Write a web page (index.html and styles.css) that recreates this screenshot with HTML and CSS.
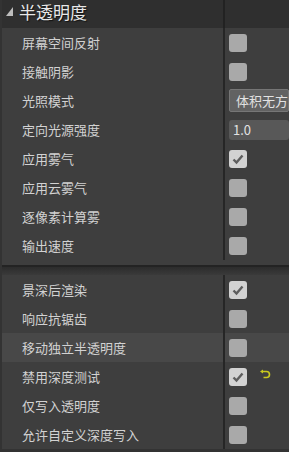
FILE: index.html
```html
<!DOCTYPE html>
<html lang="zh">
<head>
    <meta charset="UTF-8">
    <meta name="viewport" content="width=device-width, initial-scale=1.0">
    <title>半透明度</title>
    <link rel="stylesheet" href="styles.css">
</head>
<body>

<div class="panel">
    <div class="category">
        <div class="cat-name"><span class="arrow"></span><span class="cat-title">半透明度</span></div>
        <div class="cat-value"></div>
    </div>

    <div class="group">
        <div class="row"><div class="name">屏幕空间反射</div><div class="value"><span class="check"></span></div></div>
        <div class="row"><div class="name">接触阴影</div><div class="value"><span class="check"></span></div></div>
        <div class="row"><div class="name">光照模式</div><div class="value"><span class="combo">体积无方</span></div></div>
        <div class="row"><div class="name">定向光源强度</div><div class="value"><span class="numbox">1.0</span></div></div>
        <div class="row"><div class="name">应用雾气</div><div class="value"><span class="check on"><svg viewBox="0 0 18 18"><path d="M4.5 9.5 L7.5 12.5 L13.5 5.5"/></svg></span></div></div>
        <div class="row"><div class="name">应用云雾气</div><div class="value"><span class="check"></span></div></div>
        <div class="row"><div class="name">逐像素计算雾</div><div class="value"><span class="check"></span></div></div>
        <div class="row"><div class="name">输出速度</div><div class="value"><span class="check"></span></div></div>
    </div>

    <div class="group-gap"></div>

    <div class="group">
        <div class="row"><div class="name">景深后渲染</div><div class="value"><span class="check on"><svg viewBox="0 0 18 18"><path d="M4.5 9.5 L7.5 12.5 L13.5 5.5"/></svg></span></div></div>
        <div class="row"><div class="name">响应抗锯齿</div><div class="value"><span class="check"></span></div></div>
        <div class="row hover"><div class="name">移动独立半透明度</div><div class="value"><span class="check"></span></div></div>
        <div class="row">
            <div class="name">禁用深度测试</div>
            <div class="value">
                <span class="check on"><svg viewBox="0 0 18 18"><path d="M4.5 9.5 L7.5 12.5 L13.5 5.5"/></svg></span>
                <svg class="reset" viewBox="0 0 12 11"><path d="M3 2.5 H7.5 A3 3 0 0 1 7.5 8.5 H4.5"/><path class="tip" d="M1 2.5 L4 0.5 L4 4.5 Z"/></svg>
            </div>
        </div>
        <div class="row"><div class="name">仅写入透明度</div><div class="value"><span class="check"></span></div></div>
        <div class="row"><div class="name">允许自定义深度写入</div><div class="value"><span class="check"></span></div></div>
    </div>
</div>

</body>
</html>
```

FILE: styles.css
```css
body {
    margin: 0;
    background-color: #333333;
    font-family: "Noto Sans CJK SC", "Noto Sans", sans-serif;
    color: #d2d2d2;
    overflow: hidden;
}
.panel {
    margin-left: 2px;
    background-color: #3e3e3e;
}
.category {
    display: flex;
    height: 28px;
    background-color: #2f2f2f;
}
.cat-name {
    width: 221px;
    display: flex;
    align-items: flex-start;
}
.cat-title {
    font-size: 17px;
    line-height: 24px;
    color: #e8e8e8;
    text-shadow: 1px 1px 1px #111;
}
.arrow {
    width: 0;
    height: 0;
    margin: 7px 6px 0 4px;
    border-left: 7px solid transparent;
    border-bottom: 9px solid #bdbdbd;
}
.cat-value {
    flex: 1;
    border-left: 2px solid #222222;
}
.row {
    display: flex;
    height: 29px;
}
.row.hover {
    background-color: #484848;
}
.name {
    width: 201px;
    padding-left: 20px;
    display: flex;
    align-items: center;
    font-size: 13px;
    white-space: nowrap;
}
.value {
    flex: 1;
    display: flex;
    align-items: center;
    padding-left: 4px;
    border-left: 2px solid #262626;
    overflow: hidden;
    white-space: nowrap;
}
.check {
    width: 18px;
    height: 18px;
    border-radius: 3px;
    background-color: #a9a9a9;
    flex-shrink: 0;
}
.check.on {
    background-color: #d2d2d2;
}
.check svg {
    width: 18px;
    height: 18px;
    display: block;
}
.check svg path {
    fill: none;
    stroke: #5e5e5e;
    stroke-width: 2.4;
}
.combo {
    display: block;
    height: 21px;
    padding-left: 6px;
    width: 100px;
    line-height: 21px;
    font-size: 13px;
    color: #e2e2e2;
    background-color: #626262;
    border: 1px solid #767676;
    border-radius: 2px;
}
.numbox {
    display: block;
    height: 20px;
    padding-left: 4px;
    width: 100px;
    line-height: 20px;
    font-size: 13px;
    color: #e2e2e2;
    background-color: #585858;
    border-radius: 3px;
}
.reset {
    width: 12px;
    height: 11px;
    margin-left: 12px;
    margin-top: -4px;
}
.reset path {
    fill: none;
    stroke: #c9c91e;
    stroke-width: 1.6;
}
.reset path.tip {
    fill: #c9c91e;
    stroke: none;
}
.group-gap {
    height: 15px;
    background: linear-gradient(#3e3e3e 0, #3e3e3e 5px, #232323 5px, #232323 7px, #2c2c2c 7px, #3a3a3a 15px);
}
```
